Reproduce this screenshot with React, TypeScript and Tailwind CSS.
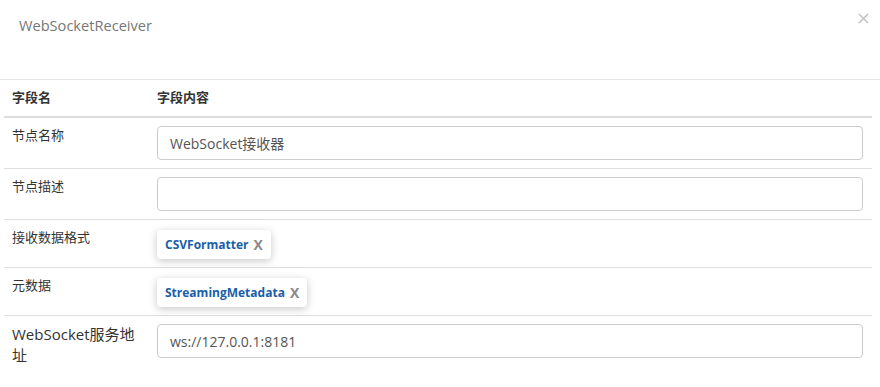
const font = { fontFamily: '"Open Sans", "Noto Sans CJK SC", sans-serif' };

type Row = { label: string; kind: 'input' | 'tag'; value: string };

const rows: Row[] = [
  { label: '节点名称', kind: 'input', value: 'WebSocket接收器' },
  { label: '节点描述', kind: 'input', value: '' },
  { label: '接收数据格式', kind: 'tag', value: 'CSVFormatter' },
  { label: '元数据', kind: 'tag', value: 'StreamingMetadata' },
  { label: 'WebSocket服务地址', kind: 'input', value: 'ws://127.0.0.1:8181' },
];

function Tag({ text }: { text: string }) {
  return (
    <span className="inline-flex items-center gap-[5px] h-[29px] pl-2 pr-[8px] mt-[2px] rounded-[4px] bg-white shadow-[0_2px_8px_rgba(0,0,0,0.22)]">
      <span className="text-[12px] font-bold text-[#1a5ea8]">{text}</span>
      <span className="text-[14px] font-bold text-[#8a8a8a]">X</span>
    </span>
  );
}

export default function App() {
  return (
    <div className="w-[880px] h-[387px] bg-white overflow-hidden text-[#333]" style={font}>
      {/* Header */}
      <div className="relative h-[80px] border-b border-[#e5e5e5]">
        <div className="pl-[19px] pt-[15px] text-[14.6px] text-[#777]">WebSocketReceiver</div>
        <svg className="absolute left-[858px] top-[13px]" width="11" height="11" viewBox="0 0 11 11">
          <path d="M1 1L10 10M10 1L1 10" stroke="#c4c4c4" strokeWidth="1.6" />
        </svg>
      </div>

      {/* Table */}
      <div className="px-[4px] pr-[8px]">
        <div className="flex h-[38px] items-center border-b-2 border-[#ddd] text-[13px] font-bold">
          <div className="w-[145px] pl-2">字段名</div>
          <div className="pl-2">字段内容</div>
        </div>
        {rows.map((r, i) => {
          const last = i === rows.length - 1;
          return (
            <div key={r.label} className={last ? 'flex text-[13px] pb-6' : 'flex border-b border-[#ddd] text-[13px]'}>
              <div
                className={
                  last
                    ? 'w-[145px] shrink-0 pl-2 pr-[8px] pt-[8px] leading-[21px] text-[15px]'
                    : 'w-[145px] shrink-0 pl-2 pr-[16px] pt-[7px] leading-[20px]'
                }
              >
                {r.label}
              </div>
              <div className="flex-1 py-2 pl-2 pr-[9px]">
                {r.kind === 'input' ? (
                  <div className="h-[34px] rounded-[4px] border border-[#ccc] px-3 flex items-center text-[14px] text-[#555]">
                    {r.value}
                  </div>
                ) : (
                  <Tag text={r.value} />
                )}
              </div>
            </div>
          );
        })}
      </div>
    </div>
  );
}
